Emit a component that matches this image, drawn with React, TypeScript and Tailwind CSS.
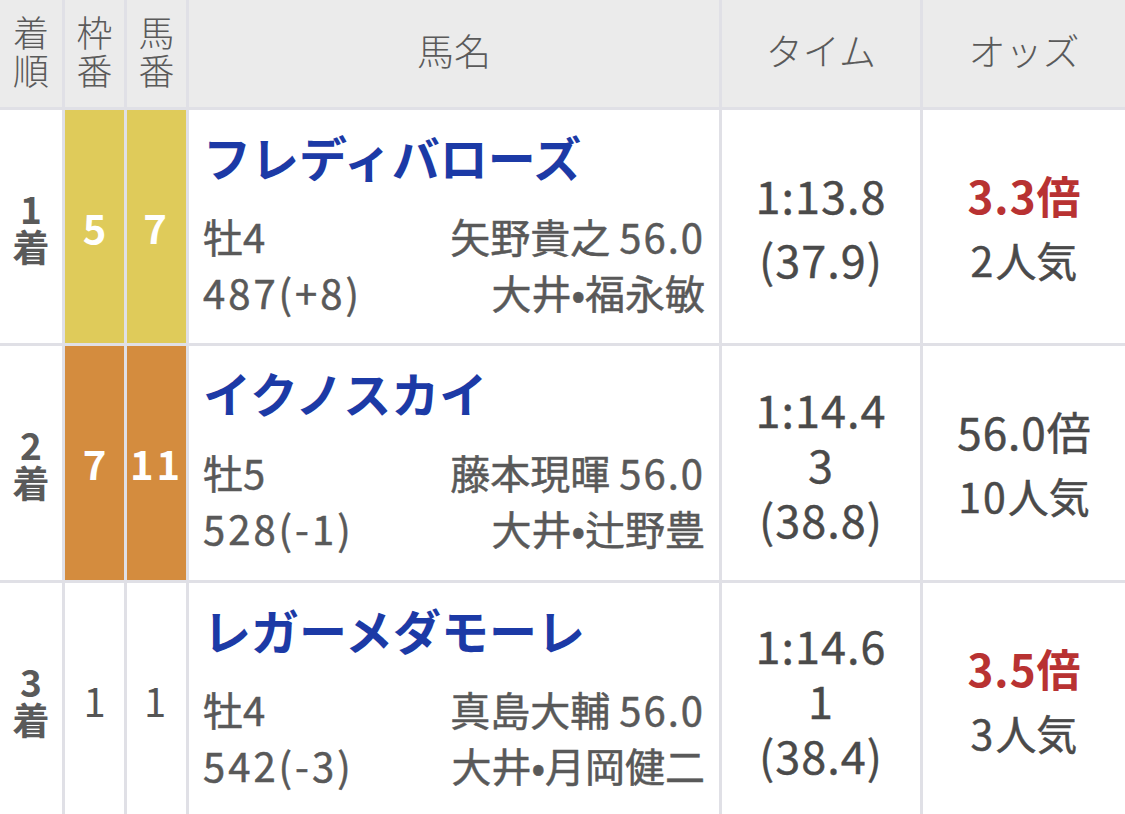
import React from "react";

const font = { fontFamily: '"Noto Sans CJK JP", "Noto Sans", sans-serif' };

type Row = {
  rank: string;
  waku: string;
  uma: string;
  wakuBg: string;
  wakuText: string;
  name: string;
  sexAge: [string, string];
  weight: string;
  jockey: string;
  kin: string;
  trainer: [string, string];
  time: string[];
  odds: string;
  oddsRed: boolean;
  popNum: string;
  timeGap: boolean;
};

const rows: Row[] = [
  {
    rank: "1",
    waku: "5",
    uma: "7",
    wakuBg: "bg-[#dfcb5a]",
    wakuText: "text-white font-bold",
    name: "フレディバローズ",
    sexAge: ["牡", "4"],
    weight: "487(+8)",
    jockey: "矢野貴之",
    kin: "56.0",
    trainer: ["大井", "福永敏"],
    time: ["1:13.8", "(37.9)"],
    odds: "3.3",
    oddsRed: true,
    popNum: "2",
    timeGap: true,
  },
  {
    rank: "2",
    waku: "7",
    uma: "11",
    wakuBg: "bg-[#d48c3e]",
    wakuText: "text-white font-bold",
    name: "イクノスカイ",
    sexAge: ["牡", "5"],
    weight: "528(-1)",
    jockey: "藤本現暉",
    kin: "56.0",
    trainer: ["大井", "辻野豊"],
    time: ["1:14.4", "3", "(38.8)"],
    odds: "56.0",
    oddsRed: false,
    popNum: "10",
    timeGap: false,
  },
  {
    rank: "3",
    waku: "1",
    uma: "1",
    wakuBg: "bg-white",
    wakuText: "text-[#555555]",
    name: "レガーメダモーレ",
    sexAge: ["牡", "4"],
    weight: "542(-3)",
    jockey: "真島大輔",
    kin: "56.0",
    trainer: ["大井", "月岡健二"],
    time: ["1:14.6", "1", "(38.4)"],
    odds: "3.5",
    oddsRed: true,
    popNum: "3",
    timeGap: false,
  },
];

export default function App() {
  return (
    <div className="w-[1125px] h-[814px] overflow-hidden bg-white" style={font}>
      <div className="grid grid-cols-[62px_59px_59px_530px_198px_1fr] grid-rows-[107px_233px_234px_233px] gap-[3px] bg-[#e0e0e6]">
        {/* header */}
        <div className="bg-[#ebebeb] flex flex-col items-center justify-start pt-[12px] text-[36px] leading-[38px] text-[#5a5a5a] font-light">
          <span>着</span>
          <span>順</span>
        </div>
        <div className="bg-[#ebebeb] flex flex-col items-center justify-start pt-[12px] text-[36px] leading-[38px] text-[#5a5a5a] font-light">
          <span>枠</span>
          <span>番</span>
        </div>
        <div className="bg-[#ebebeb] flex flex-col items-center justify-start pt-[12px] text-[36px] leading-[38px] text-[#5a5a5a] font-light">
          <span>馬</span>
          <span>番</span>
        </div>
        <div className="bg-[#ebebeb] flex items-center justify-center text-[37px] text-[#5a5a5a] font-light pb-[6px]">
          馬名
        </div>
        <div className="bg-[#ebebeb] flex items-center justify-center text-[37px] text-[#5a5a5a] font-light pb-[6px]">
          タイム
        </div>
        <div className="bg-[#ebebeb] flex items-center justify-center text-[37px] text-[#5a5a5a] font-light pb-[6px]">
          オッズ
        </div>

        {rows.map((r) => (
          <React.Fragment key={r.rank}>
            <div className="bg-white flex flex-col items-center justify-center text-[37px] leading-[38px] text-[#5a5a5a] font-bold">
              <span>{r.rank}</span>
              <span>着</span>
            </div>
            <div className={`${r.wakuBg} ${r.wakuText} flex items-center justify-center text-[40px]`}>
              {r.waku}
            </div>
            <div className={`${r.wakuBg} ${r.wakuText} flex items-center justify-center text-[40px] tracking-[3px]`}>
              {r.uma}
            </div>
            <div className="bg-white flex flex-col justify-center pl-[14px] pr-[14px]">
              <div className="text-[48px] leading-[56px] font-bold text-[#1c3aa6] mb-[24px] mt-[-6px]">{r.name}</div>
              <div className="flex justify-between text-[40px] leading-[56px] text-[#595959] [-webkit-text-stroke:0.5px_#595959]">
                <span>
                  {r.sexAge[0]}
                  <span className="tracking-[2px]">{r.sexAge[1]}</span>
                </span>
                <span>
                  {r.jockey} <span className="tracking-[2px]">{r.kin}</span>
                </span>
              </div>
              <div className="flex justify-between text-[40px] leading-[56px] text-[#595959] [-webkit-text-stroke:0.5px_#595959]">
                <span className="tracking-[3px]">{r.weight}</span>
                <span>
                  {r.trainer[0]}
                  <span>•</span>
                  {r.trainer[1]}
                </span>
              </div>
            </div>
            <div className="bg-white flex flex-col items-center justify-center text-[45px] text-[#4a4a4a] tracking-[1px] [-webkit-text-stroke:0.4px_#4a4a4a]">
              {r.timeGap ? (
                <>
                  <span className="leading-[56px]">{r.time[0]}</span>
                  <span className="leading-[56px] mt-[8px]">{r.time[1]}</span>
                </>
              ) : (
                r.time.map((t, i) => (
                  <span key={i} className="leading-[55px]">
                    {t}
                  </span>
                ))
              )}
            </div>
            <div className="bg-white flex flex-col items-center justify-center">
              <span
                className={`text-[44px] leading-[64px] ${
                  r.oddsRed ? "text-[#b83232] font-bold" : "text-[#4a4a4a] [-webkit-text-stroke:0.5px_#4a4a4a]"
                }`}
              >
                <span className="tracking-[1px]">{r.odds}</span>倍
              </span>
              <span className="text-[41px] leading-[64px] text-[#4a4a4a] [-webkit-text-stroke:0.5px_#4a4a4a]">
                <span className="tracking-[2px]">{r.popNum}</span>人気
              </span>
            </div>
          </React.Fragment>
        ))}
      </div>
    </div>
  );
}
